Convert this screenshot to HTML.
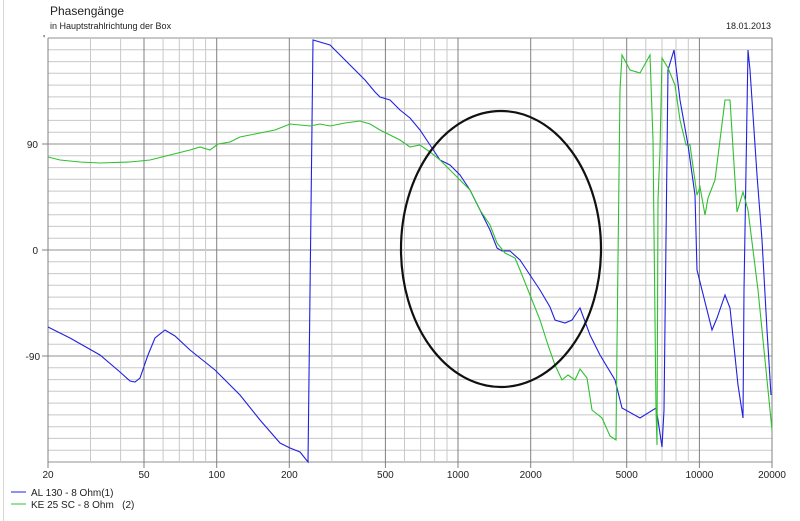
<!DOCTYPE html>
<html><head><meta charset="utf-8"><style>
html,body{margin:0;padding:0;background:#fff;width:800px;height:521px;overflow:hidden;font-family:"Liberation Sans",sans-serif}
</style></head><body>
<svg width="800" height="521" xmlns="http://www.w3.org/2000/svg" font-family="Liberation Sans, sans-serif">
<rect width="800" height="521" fill="#fff"/>
<line x1="3.5" y1="0" x2="3.5" y2="521" stroke="#d8d8d8"/>
<text x="50" y="15" font-size="12" fill="#222">Phasengänge</text>
<text x="50" y="29" font-size="9" fill="#222">in Hauptstrahlrichtung der Box</text>
<text x="771" y="29" font-size="9" fill="#222" text-anchor="end">18.01.2013</text>
<g id="grid"></g>
<g font-size="10" fill="#222" text-anchor="end">
<text x="38" y="148">90</text><text x="38" y="254">0</text><text x="40" y="360">-90</text><text x="45" y="42">'</text>
</g>
<g font-size="10" fill="#222" text-anchor="middle" id="xl"></g>
<polyline fill="none" stroke="#2020e0" stroke-width="1.1" points="48,327 70,338 100,355 120,372 130,381 135,382 140,378 148,355 155,338 165,330 175,336 190,350 215,370 240,395 260,420 280,443 290,448 300,452 308,462 313,40 330,45 350,65 365,80 375,92 380,97 390,100 400,110 410,118 420,130 430,145 440,160 450,165 460,175 470,190 480,210 490,230 497,248 502,251 510,251 520,260 530,275 540,290 550,307 555,320 565,323 572,320 580,308 590,335 600,355 615,380 622,408 640,418 656,408 658,420 662,447 664,410 668,70 674,50 680,100 688,145 695,195 697,270 702,290 712,330 717,318 725,295 730,308 738,385 743,418 744,290 748,50 750,70 757,175 762,240 767,330 771,395"/>
<polyline fill="none" stroke="#30c030" stroke-width="1.1" points="48,157 60,160 80,162 100,163 130,162 150,160 170,155 190,150 200,147 210,150 218,144 230,142 240,137 250,135 260,133 275,130 290,124 300,125 310,126 320,124 330,126 345,123 360,121 370,124 380,130 390,135 400,140 410,147 420,145 430,152 440,160 450,170 460,180 470,190 480,210 490,225 497,243 505,253 515,258 520,270 530,295 540,320 548,345 555,365 562,380 568,375 575,380 580,369 587,378 592,410 602,418 610,436 616,440 617,345 620,90 622,55 630,70 640,73 650,55 653,140 656,410 657,445 658,200 660,150 662,58 668,68 675,85 680,120 686,145 690,145 697,195 700,187 705,215 708,198 715,180 725,100 730,100 735,180 737,212 743,192 748,210 758,290 765,360 772,430"/>
<ellipse cx="501" cy="249" rx="100" ry="138" fill="none" stroke="#111" stroke-width="2.2"/>
<line x1="11" y1="492" x2="26" y2="492" stroke="#2020e0"/>
<text x="31" y="496" font-size="10" fill="#222">AL 130 - 8 Ohm(1)</text>
<line x1="11" y1="504" x2="26" y2="504" stroke="#30c030"/>
<text x="31" y="508" font-size="10" fill="#222" xml:space="preserve">KE 25 SC - 8 Ohm   (2)</text>
</svg>
<script>
var g=document.getElementById('grid'),ns="http://www.w3.org/2000/svg",s='';
var L=48,R=772,T=38,B=462,dec=(R-L)/3;
function X(f){return L+Math.log10(f/20)*dec;}
for(var i=0;i<=36;i++){var y=T+i*(B-T)/36;var m=(i%9==0);s+='<line x1="'+L+'" x2="'+R+'" y1="'+y.toFixed(1)+'" y2="'+y.toFixed(1)+'" stroke="'+(m?'#909090':'#c8c8c8')+'"/>';}
var fs=[20,30,40,50,60,70,80,90,100,200,300,400,500,600,700,800,900,1000,2000,3000,4000,5000,6000,7000,8000,9000,10000,20000];
var lab=[20,50,100,200,500,1000,2000,5000,10000,20000];
fs.forEach(function(f){var x=X(f).toFixed(1);var m=lab.indexOf(f)>=0;s+='<line x1="'+x+'" x2="'+x+'" y1="'+T+'" y2="'+(m?468:B)+'" stroke="'+(m?'#808080':'#c8c8c8')+'"/>';});
s+='<line x1="'+L+'" x2="'+(L-6)+'" y1="144" y2="144" stroke="#808080"/><line x1="'+L+'" x2="'+(L-6)+'" y1="250" y2="250" stroke="#808080"/><line x1="'+L+'" x2="'+(L-6)+'" y1="356" y2="356" stroke="#808080"/>';
g.innerHTML=s;
var xl=document.getElementById('xl'),t='';
lab.forEach(function(f){t+='<text x="'+X(f).toFixed(1)+'" y="478">'+f+'</text>';});
xl.innerHTML=t;
</script>
</body></html>
